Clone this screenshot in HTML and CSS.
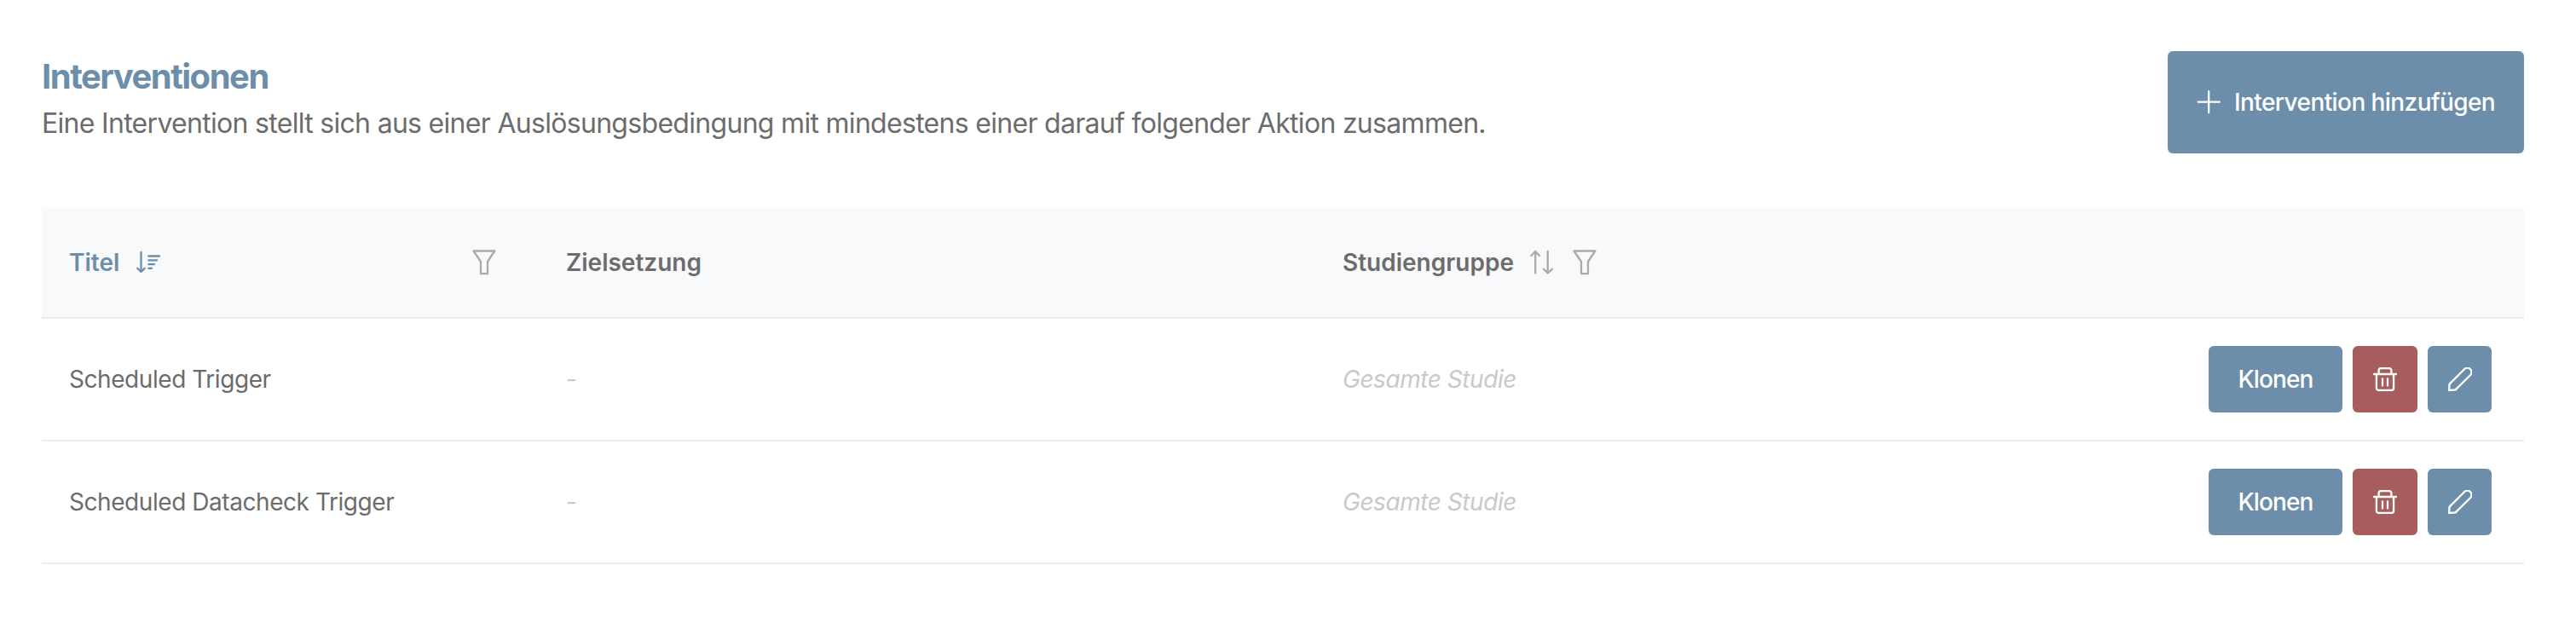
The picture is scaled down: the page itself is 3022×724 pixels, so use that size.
FILE: index.html
```html
<!DOCTYPE html>
<html lang="de">
<head>
<meta charset="utf-8">
<title>Interventionen</title>
<link rel="stylesheet" href="styles.css">
</head>
<body>
<svg class="defs" width="0" height="0">
  <symbol id="filter" viewBox="0 0 28 30"><path d="M1.500 1.500H26.300L18 14V28.200H10V14Z"/></symbol>
  <symbol id="trash" viewBox="0 0 28 28"><path d="M1 8H27M6.600 8V3.800A2.800 2.800 0 0 1 9.400 1H18.600A2.800 2.800 0 0 1 21.400 3.800V8M3.900 8V24.200A2.800 2.800 0 0 0 6.700 27H21.300A2.800 2.800 0 0 0 24.100 24.200V8M11 13.500V21.500M17 13.500V21.500"/></symbol>
  <symbol id="pencil" viewBox="0 0 28 28"><path d="M1 27L1.600 19.600L19 2.200A4.800 4.800 0 0 1 26 9.200L8.600 26.400Z"/></symbol>
</svg>
<main class="page">
  <header class="page-header">
    <div>
      <h1 class="title">Interventionen</h1>
      <p class="subtitle">Eine Intervention stellt sich aus einer Auslösungsbedingung mit mindestens einer darauf folgender Aktion zusammen.</p>
    </div>
    <button class="btn btn-add"><svg class="icon" viewBox="0 0 28 28"><path d="M14.200 1.200V26.200M1.700 13.700H26.700"/></svg><span>Intervention hinzufügen</span></button>
  </header>
  <section class="table">
    <div class="row head">
      <div class="cell sorted"><span>Titel</span><svg class="icon sort" viewBox="0 0 28 28"><path d="M5.500 2V25M1.200 20.700L5.500 25L9.800 20.700M14.300 6.500H27M14.300 11.300H24M14.300 16.100H21M14.300 20.900H18"/></svg><svg class="icon filter end"><use href="#filter"/></svg></div>
      <div class="cell goal"><span>Zielsetzung</span></div>
      <div class="cell"><span>Studiengruppe</span><svg class="icon updown" viewBox="0 0 28 30"><path d="M6.200 27.500V2M1.400 7L6.200 2L11 7M20.700 2V27.500M15.900 22.800L20.700 27.500L25.900 22.800"/></svg><svg class="icon filter"><use href="#filter"/></svg></div>
      <div class="cell"></div>
    </div>
    <div class="row">
      <div class="cell">Scheduled Trigger</div>
      <div class="cell goal muted">-</div>
      <div class="cell muted"><em>Gesamte Studie</em></div>
      <div class="cell actions"><button class="btn clone">Klonen</button><button class="btn delete"><svg class="icon"><use href="#trash"/></svg></button><button class="btn edit"><svg class="icon"><use href="#pencil"/></svg></button></div>
    </div>
    <div class="row">
      <div class="cell">Scheduled Datacheck Trigger</div>
      <div class="cell goal muted">-</div>
      <div class="cell muted"><em>Gesamte Studie</em></div>
      <div class="cell actions"><button class="btn clone">Klonen</button><button class="btn delete"><svg class="icon"><use href="#trash"/></svg></button><button class="btn edit"><svg class="icon"><use href="#pencil"/></svg></button></div>
    </div>
  </section>
</main>
</body>
</html>
```
FILE: styles.css
```css
* { box-sizing: border-box; }
body { margin: 0; background: #fff; color: #6c6c6c; font-family: Inter, "Liberation Sans", sans-serif; font-size: 28px; }
.defs { position: absolute; }
.page { padding: 60px 61px 0 49px; }
.page-header { display: flex; justify-content: space-between; height: 120px; }
.title { margin: 6px 0 0; color: #6d8eab; font-size: 40px; font-weight: 650; line-height: 48px; letter-spacing: -1.5px; }
.subtitle { margin: 7px 0 0; font-size: 32px; line-height: 48px; letter-spacing: -.7px; }
.icon { flex: none; width: 28px; height: 28px; fill: none; stroke: currentColor; stroke-width: 2.3; stroke-linecap: round; stroke-linejoin: round; overflow: visible; }
.btn { display: flex; align-items: center; justify-content: center; padding: 0; border: 0; border-radius: 6px; background: #6d8eab; color: #fff; font: 500 28px Inter, "Liberation Sans", sans-serif; white-space: nowrap; }
.btn-add { justify-content: flex-start; width: 418px; height: 120px; padding-left: 34px; gap: 16px; letter-spacing: -.58px; }
.table { margin-top: 64px; }
.row { display: grid; grid-template-columns: 584px 910px 728px 690px; height: 144px; border-bottom: 2px solid #e8ebef; letter-spacing: -.44px; }
.head { height: 130px; background: #f8f9fb; font-weight: 600; letter-spacing: 0; }
.cell { display: flex; align-items: center; padding: 0 32px; white-space: nowrap; }
.goal { padding-left: 31px; }
.sorted { padding-right: 51px; color: #6d8eab; }
.sort { margin-left: 20px; }
.updown { margin: 0 22px 0 19px; }
.filter, .updown { height: 30px; color: #aaa; }
.end { margin-left: auto; }
.muted { color: #c9c9c9; }
.actions { justify-content: flex-end; gap: 12px; padding-right: 38px; }
.clone { width: 157px; height: 78px; letter-spacing: -.9px; }
.delete { width: 76px; height: 78px; background: #a85d5d; }
.edit { width: 75px; height: 78px; }
```
